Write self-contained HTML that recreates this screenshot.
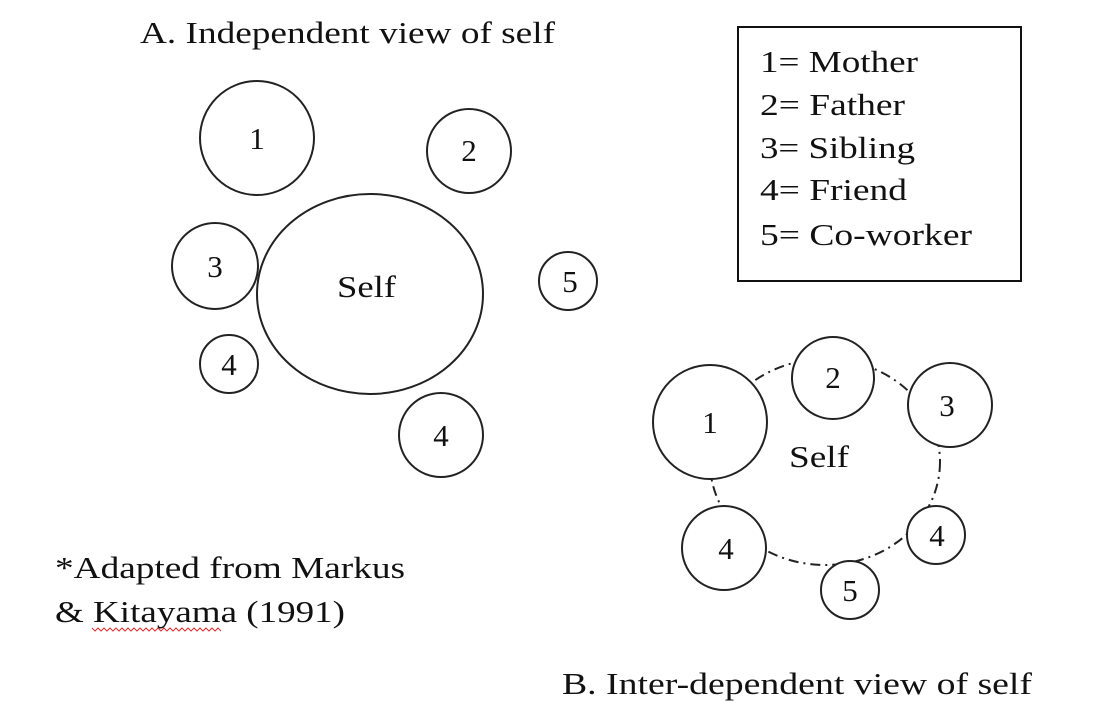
<!DOCTYPE html>
<html><head><style>
body{margin:0;background:#fff;width:1100px;height:722px;overflow:hidden}
svg text{font-family:"Liberation Serif",serif;fill:#111}
</style></head><body>
<svg width="1100" height="722" viewBox="0 0 1100 722">
<g fill="none" stroke="#222" stroke-width="2">
<circle cx="257" cy="138" r="57"/>
<circle cx="469" cy="151" r="42"/>
<circle cx="215" cy="266" r="43"/>
<ellipse cx="370" cy="294" rx="113" ry="100"/>
<circle cx="568" cy="281" r="29"/>
<circle cx="229" cy="364" r="29"/>
<circle cx="441" cy="435" r="42"/>
<ellipse cx="825" cy="462" rx="115" ry="103" stroke-dasharray="10 5 2 5"/>
</g>
<g fill="#fff" stroke="#222" stroke-width="2">
<circle cx="710" cy="422" r="57"/>
<circle cx="833" cy="378" r="41"/>
<circle cx="950" cy="405" r="42"/>
<circle cx="724" cy="548" r="42"/>
<circle cx="936" cy="535" r="29"/>
<circle cx="850" cy="590" r="29"/>
</g>
<rect x="738" y="27" width="283" height="254" fill="none" stroke="#111" stroke-width="2"/>
<g font-size="31" lengthAdjust="spacingAndGlyphs">
<text x="140" y="43" textLength="415" lengthAdjust="spacingAndGlyphs">A. Independent view of self</text>
<text x="760" y="72" textLength="158" lengthAdjust="spacingAndGlyphs">1= Mother</text>
<text x="760" y="115" textLength="145" lengthAdjust="spacingAndGlyphs">2= Father</text>
<text x="760" y="158" textLength="155" lengthAdjust="spacingAndGlyphs">3= Sibling</text>
<text x="760" y="200" textLength="147" lengthAdjust="spacingAndGlyphs">4= Friend</text>
<text x="760" y="245" textLength="212" lengthAdjust="spacingAndGlyphs">5= Co-worker</text>
<text x="257" y="149" text-anchor="middle">1</text>
<text x="469" y="161" text-anchor="middle">2</text>
<text x="215" y="277" text-anchor="middle">3</text>
<text x="337" y="297" textLength="59" lengthAdjust="spacingAndGlyphs">Self</text>
<text x="570" y="292" text-anchor="middle">5</text>
<text x="229" y="375" text-anchor="middle">4</text>
<text x="441" y="446" text-anchor="middle">4</text>
<text x="710" y="433" text-anchor="middle">1</text>
<text x="833" y="388" text-anchor="middle">2</text>
<text x="947" y="416" text-anchor="middle">3</text>
<text x="789" y="467" textLength="60" lengthAdjust="spacingAndGlyphs">Self</text>
<text x="726" y="559" text-anchor="middle">4</text>
<text x="937" y="546" text-anchor="middle">4</text>
<text x="850" y="601" text-anchor="middle">5</text>
<text x="55" y="578" textLength="350" lengthAdjust="spacingAndGlyphs">*Adapted from Markus</text>
<text x="55" y="622" textLength="290" lengthAdjust="spacingAndGlyphs">&amp; Kitayama (1991)</text>
<text x="562" y="694" textLength="470" lengthAdjust="spacingAndGlyphs">B. Inter-dependent view of self</text>
</g>
<path d="M92 628 l3 3 3-3 3 3 3-3 3 3 3-3 3 3 3-3 3 3 3-3 3 3 3-3 3 3 3-3 3 3 3-3 3 3 3-3 3 3 3-3 3 3 3-3 3 3 3-3 3 3 3-3 3 3 3-3 3 3 3-3 3 3 3-3 3 3 3-3 3 3 3-3 3 3 3-3 3 3 3-3 3 3 3-3 3 3" fill="none" stroke="#e03030" stroke-width="1"/>
</svg>
</body></html>
